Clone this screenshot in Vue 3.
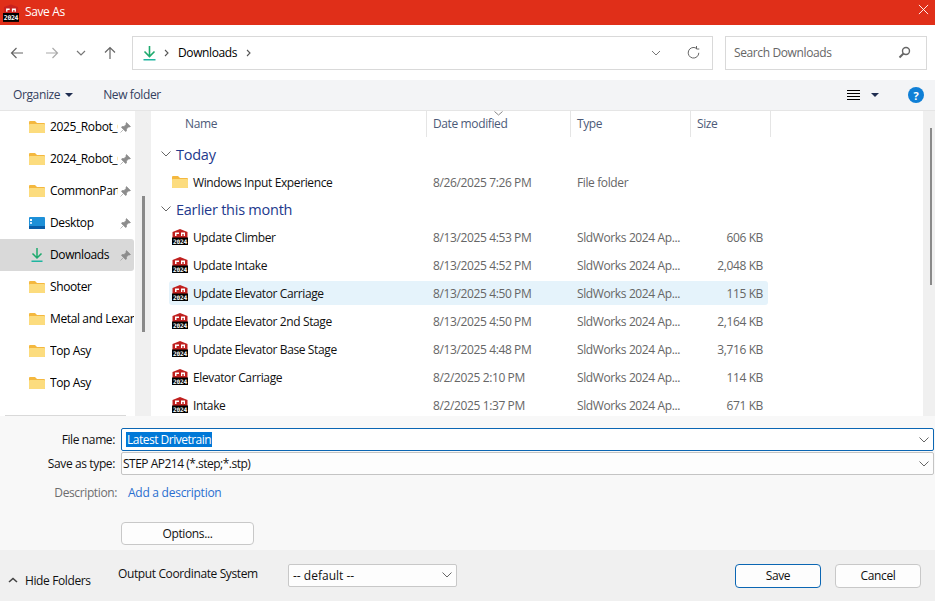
<template>
  <div class="dialog">
    <header class="titlebar">
      <svg class="app-icon" viewBox="0 0 18 20">
        <path d="M1 4 Q1 3 2 3 L9 .5 L16 3 Q17 3 17 4 V12 H1 Z" fill="#c9211e" />
        <path d="M3.5 5 H7.5 V6.5 H5 V8.5 H3.5 Z M10 5 H14.5 V8.5 H13 V6.5 H11.5 V8.5 H10 Z" fill="#fff" />
        <rect x="0" y="10" width="18" height="10" fill="#000" />
        <text x="9" y="18.3" text-anchor="middle" class="icon-year">2024</text>
      </svg>
      <span class="title">Save As</span>
      <svg class="close" viewBox="0 0 12 12"><path d="M1 1 L11 11 M11 1 L1 11" stroke="#fff" stroke-width="1" fill="none" /></svg>
    </header>

    <div class="navbar">
      <div class="nav-buttons">
        <svg width="14" height="14" viewBox="0 0 14 14" class="nav-back"><path d="M13 7 H1.5 M6.5 2 L1.5 7 L6.5 12" stroke="#666" stroke-width="1.2" fill="none" /></svg>
        <svg width="14" height="14" viewBox="0 0 14 14" class="nav-forward"><path d="M1 7 H12.5 M7.5 2 L12.5 7 L7.5 12" stroke="#aaa" stroke-width="1.2" fill="none" /></svg>
        <svg width="10" height="6" viewBox="0 0 10 6" class="nav-recent"><path d="M1 1 L5 5 L9 1" stroke="#777" stroke-width="1.2" fill="none" /></svg>
        <svg width="14" height="14" viewBox="0 0 14 14" class="nav-up"><path d="M7 13 V1.5 M2 6.5 L7 1.5 L12 6.5" stroke="#666" stroke-width="1.2" fill="none" /></svg>
      </div>
      <div class="address">
        <svg width="13" height="16" viewBox="0 0 13 16"><path d="M6.5 1 V11 M1.5 6.5 L6.5 11.5 L11.5 6.5" stroke="#1eaa6e" stroke-width="1.6" fill="none" /><rect x="0.5" y="14" width="12" height="1.5" fill="#1fb5a0" /></svg>
        <svg class="crumb-sep" width="5" height="8" viewBox="0 0 5 8"><path d="M1 1 L4 4 L1 7" stroke="#555" stroke-width="1.1" fill="none" /></svg>
        <span class="crumb">Downloads</span>
        <svg class="crumb-sep" width="5" height="8" viewBox="0 0 5 8"><path d="M1 1 L4 4 L1 7" stroke="#555" stroke-width="1.1" fill="none" /></svg>
        <svg class="address-down" width="10" height="6" viewBox="0 0 10 6"><path d="M1 1 L5 5 L9 1" stroke="#777" stroke-width="1" fill="none" /></svg>
        <svg class="refresh" width="13" height="13" viewBox="0 0 13 13"><path d="M11.8 6.8 A5.3 5.3 0 1 1 9.2 2.2 M9.5 0 V3 H12.3" stroke="#666" stroke-width="1" fill="none" /></svg>
      </div>
      <div class="search">
        <span>Search Downloads</span>
        <svg width="13" height="13" viewBox="0 0 13 13"><circle cx="8" cy="5" r="3.5" stroke="#666" stroke-width="1.4" fill="none" /><path d="M5.5 7.5 L1.5 11.5" stroke="#666" stroke-width="2" /></svg>
      </div>
    </div>

    <div class="toolbar">
      <span class="tool">Organize</span>
      <svg class="caret organize-caret" width="8" height="4" viewBox="0 0 8 4"><path d="M0 0 H8 L4 4 Z" fill="#1f2d50" /></svg>
      <span class="tool new-folder">New folder</span>
      <svg class="view-icon" width="13" height="10" viewBox="0 0 13 10"><path d="M0 .5 H13 M0 3.5 H13 M0 6.5 H13 M0 9.5 H13" stroke="#000" /></svg>
      <svg class="caret view-caret" width="8" height="4" viewBox="0 0 8 4"><path d="M0 0 H8 L4 4 Z" fill="#1f2d50" /></svg>
      <span class="help">?</span>
    </div>

    <div class="main">
      <nav class="sidebar">
        <div v-for="item in places" :key="item.id" class="place" :class="{ active: item.active }">
          <svg v-if="item.icon === 'folder'" class="place-icon" viewBox="0 0 16 14">
            <path d="M0 2 Q0 1 1 1 H6 L8 3 H15 Q16 3 16 4 V12 Q16 13 15 13 H1 Q0 13 0 12 Z" fill="#f4b83f" />
            <path d="M0 5 Q0 4 1 4 H15 Q16 4 16 5 V12 Q16 13 15 13 H1 Q0 13 0 12 Z" fill="#fcdc7e" />
          </svg>
          <svg v-else-if="item.icon === 'desktop'" class="place-icon" viewBox="0 0 16 14">
            <rect y="1" width="16" height="12" rx="1" fill="#1e90d8" />
            <rect y="10" width="16" height="3" fill="#0b5da8" />
            <rect x="1" y="3" width="2" height="2" fill="#fff" />
            <rect x="1" y="6" width="2" height="2" fill="#cfeaff" />
          </svg>
          <svg v-else class="place-icon" viewBox="0 0 16 14">
            <path d="M8 0 V10 M3.5 5.5 L8 10 L12.5 5.5" stroke="#1eaa6e" stroke-width="1.5" fill="none" />
            <rect x="2.5" y="12.5" width="11" height="1.5" fill="#1fb5a0" />
          </svg>
          <span class="place-name" :class="{ pinned: item.pinned }">{{ item.name }}</span>
          <svg v-if="item.pinned" class="pin" width="11" height="11" viewBox="0 0 11 11">
            <path d="M6.5 .5 L10.5 4.5 L9.5 5 L8.5 5 L6.5 7 V9 L5.5 9.5 L1.5 5.5 L2 4.5 H4 L6 2.5 V1.5 Z M3 8 L.5 10.5" fill="#8c8c8c" stroke="#8c8c8c" stroke-width=".6" />
          </svg>
        </div>
        <div class="sidebar-line"></div>
      </nav>
      <div class="side-scroll"><div class="side-thumb"></div></div>

      <section class="files">
        <div class="columns">
          <div class="col col-name">Name</div>
          <div class="col col-date">
            <svg class="sort" width="9" height="5" viewBox="0 0 9 5"><path d="M.5 .5 L4.5 4 L8.5 .5" stroke="#888" fill="none" /></svg>
            Date modified
          </div>
          <div class="col col-type">Type</div>
          <div class="col col-size">Size</div>
        </div>
        <div class="list">
          <template v-for="group in groups" :key="group.label">
            <div class="group">
              <svg width="10" height="6" viewBox="0 0 10 6"><path d="M.5 .5 L5 5 L9.5 .5" stroke="#666" fill="none" /></svg>
              <span>{{ group.label }}</span>
            </div>
            <div v-for="row in group.rows" :key="row.name" class="row" :class="{ selected: row.selected }">
              <div class="cell-name">
                <svg v-if="row.folder" class="file-icon" viewBox="0 0 16 16">
                  <path d="M0 3 Q0 2 1 2 H6 L8 4 H15 Q16 4 16 5 V13 Q16 14 15 14 H1 Q0 14 0 13 Z" fill="#f4b83f" />
                  <path d="M0 6 Q0 5 1 5 H15 Q16 5 16 6 V13 Q16 14 15 14 H1 Q0 14 0 13 Z" fill="#fcdc7e" />
                </svg>
                <svg v-else class="file-icon" viewBox="0 0 16 16">
                  <path d="M.5 3 L8 0 L15.5 3 V10 H.5 Z" fill="#c0201f" />
                  <path d="M3 3.5 H7 V5 H4.5 V7 H3 Z M9 3.5 H13 V7 H11.7 V5 H10.3 V7 H9 Z" fill="#fff" />
                  <rect x="0" y="8.5" width="16" height="7.5" fill="#000" />
                  <text x="8" y="14.9" text-anchor="middle" class="icon-year small">2024</text>
                </svg>
                <span>{{ row.name }}</span>
              </div>
              <div class="cell-date">{{ row.date }}</div>
              <div class="cell-type">{{ row.type }}</div>
              <div class="cell-size">{{ row.size }}</div>
            </div>
          </template>
        </div>
      </section>
      <div class="list-scroll"><div class="list-thumb"></div></div>
    </div>

    <div class="form">
      <div class="field">
        <label>File name:</label>
        <div class="combo focused">
          <span class="picked">Latest Drivetrain</span>
          <svg width="10" height="6" viewBox="0 0 10 6"><path d="M.5 .5 L5 5 L9.5 .5" stroke="#666" fill="none" /></svg>
        </div>
      </div>
      <div class="field type-field">
        <label>Save as type:</label>
        <div class="combo">
          <span>STEP AP214 (*.step;*.stp)</span>
          <svg width="10" height="6" viewBox="0 0 10 6"><path d="M.5 .5 L5 5 L9.5 .5" stroke="#666" fill="none" /></svg>
        </div>
      </div>
      <div class="desc">
        <span class="desc-label">Description:</span>
        <a class="desc-link">Add a description</a>
      </div>
      <button class="btn options">Options...</button>
    </div>

    <footer class="footer">
      <div class="hide-folders">
        <svg width="10" height="6" viewBox="0 0 10 6"><path d="M1 5 L5 1.5 L9 5" stroke="#444" stroke-width="1.6" fill="none" /></svg>
        <span>Hide Folders</span>
      </div>
      <span class="coord-label">Output Coordinate System</span>
      <div class="coord-select">
        <span>-- default --</span>
        <svg width="10" height="6" viewBox="0 0 10 6"><path d="M.5 .5 L5 5 L9.5 .5" stroke="#666" fill="none" /></svg>
      </div>
      <button class="btn save">Save</button>
      <button class="btn cancel">Cancel</button>
    </footer>
  </div>
</template>

<script setup>
const places = [
  { id: 1, name: '2025_Robot_CAD', icon: 'folder', pinned: true },
  { id: 2, name: '2024_Robot_CAD', icon: 'folder', pinned: true },
  { id: 3, name: 'CommonParts', icon: 'folder', pinned: true },
  { id: 4, name: 'Desktop', icon: 'desktop', pinned: true },
  { id: 5, name: 'Downloads', icon: 'download', pinned: true, active: true },
  { id: 6, name: 'Shooter', icon: 'folder' },
  { id: 7, name: 'Metal and Lexan', icon: 'folder' },
  { id: 8, name: 'Top Asy', icon: 'folder' },
  { id: 9, name: 'Top Asy', icon: 'folder' },
]

const sw = 'SldWorks 2024 Ap...'

const groups = [
  {
    label: 'Today',
    rows: [
      { name: 'Windows Input Experience', date: '8/26/2025 7:26 PM', type: 'File folder', size: '', folder: true },
    ],
  },
  {
    label: 'Earlier this month',
    rows: [
      { name: 'Update Climber', date: '8/13/2025 4:53 PM', type: sw, size: '606 KB' },
      { name: 'Update Intake', date: '8/13/2025 4:52 PM', type: sw, size: '2,048 KB' },
      { name: 'Update Elevator Carriage', date: '8/13/2025 4:50 PM', type: sw, size: '115 KB', selected: true },
      { name: 'Update Elevator 2nd Stage', date: '8/13/2025 4:50 PM', type: sw, size: '2,164 KB' },
      { name: 'Update Elevator Base Stage', date: '8/13/2025 4:48 PM', type: sw, size: '3,716 KB' },
      { name: 'Elevator Carriage', date: '8/2/2025 2:10 PM', type: sw, size: '114 KB' },
      { name: 'Intake', date: '8/2/2025 1:37 PM', type: sw, size: '671 KB' },
    ],
  },
]
</script>

<style>
html, body { margin: 0; background: #fff; overflow: hidden; }
</style>

<style scoped>
.dialog {
  width: 935px;
  height: 601px;
  display: flex;
  flex-direction: column;
  overflow: hidden;
  font-family: "Open Sans", "Noto Sans", sans-serif;
  font-size: 12px;
  letter-spacing: -0.38px;
  color: #1a1a1a;
}

/* title bar */
.titlebar {
  height: 25px;
  background: #e02f19;
  color: #fff;
  display: flex;
  align-items: center;
  padding: 0 5px 0 3px;
  flex: none;
}
.app-icon { width: 16px; height: 18px; margin-top: 0; flex: none; }
.icon-year { font: 700 7.4px "DejaVu Sans Mono", monospace; fill: #fff; letter-spacing: -0.4px; }
.icon-year.small { font-size: 6.2px; letter-spacing: -0.2px; }
.title { margin-left: 6px; margin-top: -2px; }
.close { width: 11px; height: 11px; margin-left: auto; margin-top: -7px; margin-right: 1px; }

/* nav */
.navbar {
  height: 55px;
  flex: none;
  display: flex;
  align-items: center;
  box-sizing: border-box;
}
.nav-buttons { width: 132px; display: flex; align-items: center; flex: none; }
.nav-back { margin-left: 10px; }
.nav-forward { margin-left: 21px; }
.nav-recent { margin-left: 17px; }
.nav-up { margin-left: 17px; }
.address {
  width: 581px;
  height: 34px;
  box-sizing: border-box;
  border: 1px solid #d9d9d9;
  display: flex;
  align-items: center;
  padding-left: 10px;
  color: #000;
}
.crumb-sep { margin-left: 8px; }
.crumb { margin-left: 9px; width: 60px; white-space: nowrap; margin-top: -1px; }
.address-down { margin-left: 400px; }
.refresh { margin-left: 26px; }
.search {
  width: 202px;
  height: 34px;
  box-sizing: border-box;
  margin-left: 12px;
  border: 1px solid #d9d9d9;
  display: flex;
  align-items: center;
  justify-content: space-between;
  padding: 0 15px 0 8px;
  color: #666;
}

/* toolbar */
.toolbar {
  height: 30px;
  flex: none;
  background: #f3f4f6;
  border-bottom: 1px solid #e5e5e5;
  display: flex;
  align-items: center;
  padding-left: 13px;
  color: #33405e;
}
.tool { margin-top: -1px; }
.organize-caret { margin-left: 5px; }
.new-folder { margin-left: 30px; }
.view-icon { margin-left: auto; }
.view-caret { margin-left: 11px; }
.help {
  width: 16px;
  height: 16px;
  border-radius: 50%;
  background: #0f7fd6;
  color: #fff;
  font-weight: 700;
  font-size: 11px;
  display: flex;
  align-items: center;
  justify-content: center;
  margin-left: 29px;
  margin-right: 11px;
}

/* main */
.main { flex: none; height: 305px; display: flex; overflow: hidden; }
.sidebar {
  width: 135px;
  flex: none;
  position: relative;
  color: #000;
}
.place {
  height: 32px;
  margin-right: 1px;
  display: flex;
  align-items: center;
  padding-left: 29px;
  box-sizing: border-box;
  border-radius: 0 3px 3px 0;
}
.place.active { background: #d9d9d9; }
.place-icon { width: 16px; height: 14px; flex: none; }
.place-name { margin-left: 5px; margin-top: -2px; white-space: nowrap; overflow: hidden; width: 84px; }
.place-name.pinned { width: 68px; }
.pin { margin-left: 2px; }
.sidebar-line {
  position: absolute;
  left: 5px;
  right: 9px;
  bottom: 0;
  height: 1px;
  background: #d9d9d9;
}
.side-scroll {
  width: 16px;
  flex: none;
  background: #f0f0f0;
  position: relative;
}
.side-thumb {
  position: absolute;
  left: 7px;
  top: 85px;
  width: 3px;
  height: 136px;
  background: #8a8a8a;
}
.files { width: 772px; flex: none; overflow: hidden; }
.columns {
  height: 26px;
  display: flex;
  color: #4c5a78;
}
.col {
  position: relative;
  box-sizing: border-box;
  border-right: 1px solid #e5e5e5;
  padding-top: 4px;
  padding-left: 6px;
  flex: none;
}
.col-name { width: 276px; padding-left: 34px; }
.col-date { width: 144px; }
.col-type { width: 120px; }
.col-size { width: 80px; }
.sort { position: absolute; left: 67px; top: 0; }
.list { padding-top: 5px; padding-left: 8px; }
.group {
  height: 24px;
  margin-bottom: 4px;
  display: flex;
  align-items: center;
  color: #22398c;
  font-size: 14.5px;
  letter-spacing: -0.25px;
  padding-left: 2px;
}
.group span { margin-left: 5px; }
.row + .group { margin-top: -1px; }
.row {
  height: 24px;
  width: 599px;
  margin-left: 10px;
  margin-bottom: 4px;
  display: flex;
  align-items: center;
  border-radius: 3px;
  color: #666;
  box-sizing: border-box;
}
.row.selected { background: #e5f3fb; }
.cell-name {
  width: 258px;
  flex: none;
  display: flex;
  align-items: center;
  padding-left: 3px;
  box-sizing: border-box;
  color: #111;
}
.cell-name span { margin-left: 5px; }
.file-icon { width: 16px; height: 16px; flex: none; }
.cell-date { width: 144px; flex: none; padding-left: 6px; box-sizing: border-box; }
.cell-type { width: 120px; flex: none; padding-left: 6px; box-sizing: border-box; }
.cell-size { width: 72px; flex: none; text-align: right; }
.list-scroll { width: 12px; flex: none; background: #f0f0f0; position: relative; }
.list-thumb { position: absolute; left: 7px; top: 17px; width: 2px; height: 157px; background: #8a8a8a; }

/* form */
.form {
  height: 134px;
  flex: none;
  box-sizing: border-box;
  background: #f8f8f8;
  padding-top: 12px;
  position: relative;
}
.field {
  display: flex;
  align-items: center;
  height: 23px;
  letter-spacing: -0.5px;
}
.type-field { margin-top: 1px; }
.field label { width: 115px; text-align: right; color: #111; flex: none; letter-spacing: -0.38px; }
.combo {
  margin-left: 6px;
  width: 813px;
  height: 23px;
  box-sizing: border-box;
  border: 1px solid #c4c4c4;
  border-radius: 2px;
  background: #fdfdfd;
  display: flex;
  align-items: center;
  justify-content: space-between;
  padding: 0 4px 0 1px;
  color: #111;
}
.combo.focused { border: 1px solid #0b66b3; background: #fff; padding-left: 4px; }
.picked { background: #0078d7; color: #fff; line-height: 15px; padding: 0 1px; margin-top: -1px; }
.desc { display: flex; margin-top: 6px; height: 22px; align-items: center; }
.desc-label { width: 117px; text-align: right; color: #6d6d6d; flex: none; }
.desc-link { margin-left: 11px; color: #2a6fd0; letter-spacing: -0.26px; }
.btn {
  font: inherit;
  letter-spacing: inherit;
  color: #111;
  background: #fdfdfd;
  border: 1px solid #c8c8c8;
  border-radius: 4px;
  box-sizing: border-box;
  padding: 0;
}
.options { position: absolute; left: 121px; top: 106px; width: 133px; height: 23px; }

/* footer */
.footer {
  height: 51px;
  flex: none;
  background: #f0f0f0;
  display: flex;
  align-items: center;
  position: relative;
}
.hide-folders { display: flex; align-items: center; padding-left: 8px; width: 118px; box-sizing: border-box; margin-top: 9px; color: #111; }
.hide-folders span { margin-left: 7px; }
.coord-label { color: #111; width: 170px; margin-top: -5px; }
.coord-select {
  width: 169px;
  height: 23px;
  box-sizing: border-box;
  border: 1px solid #c8c8c8;
  border-radius: 2px;
  background: #fdfdfd;
  display: flex;
  align-items: center;
  justify-content: space-between;
  padding: 0 4px 0 4px;
  margin-top: -1px;
  color: #111;
  letter-spacing: 0;
}
.save { margin-left: 278px; width: 86px; height: 24px; border: 1px solid #0b66b3; margin-top: 1px; padding-bottom: 1px; }
.cancel { margin-left: 14px; width: 86px; height: 24px; margin-top: 1px; padding-bottom: 1px; }
</style>
